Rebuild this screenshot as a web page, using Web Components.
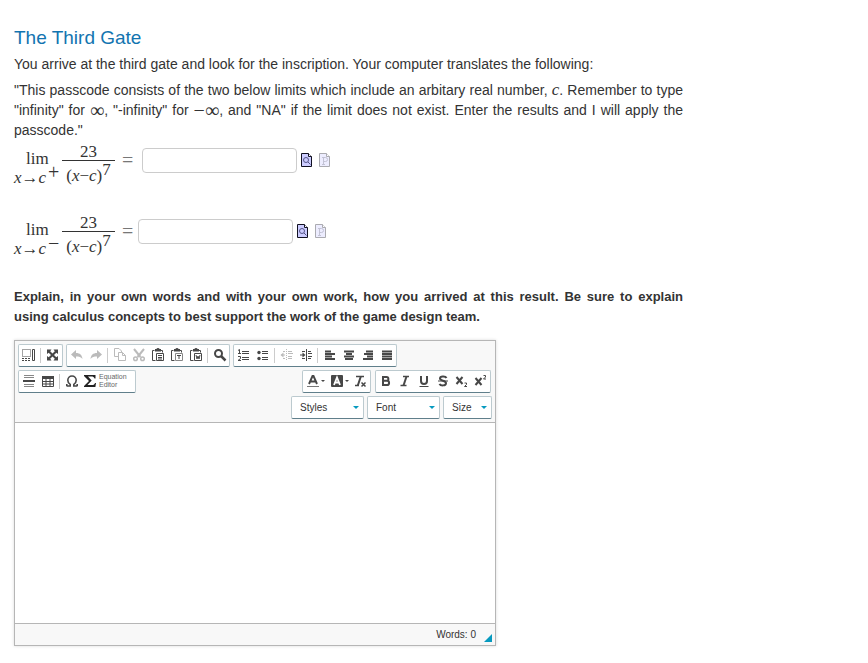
<!DOCTYPE html>
<html lang="en">
<head>
<meta charset="utf-8">
<meta name="viewport" content="width=device-width, initial-scale=1">
<title>The Third Gate</title>
<style>
    body {
        margin: 0;
        background: #fff;
        color: #333;
        font-family: "Liberation Sans", Arial, sans-serif;
        font-size: 14px;
        line-height: 20px;
    }
</style>
</head>
<body>
<question-page>
    <span slot="title">The Third Gate</span>
    <p>You arrive at the third gate and look for the inscription. Your computer translates the following:</p>
    <p class="story">"This passcode consists of the two below limits which include an arbitary real number, <math-text italic>c</math-text>. Remember to type "infinity" for <math-text big>∞</math-text>, "-infinity" for <math-text big>−∞</math-text>, and "NA" if the limit does not exist. Enter the results and I will apply the passcode."</p>
    <limit-question side="+" label="Limit from the right"></limit-question>
    <limit-question side="−" label="Limit from the left"></limit-question>
    <p class="task">Explain, in your own words and with your own work, how you arrived at this result. Be sure to explain using&nbsp;calculus concepts to best support the work of the game design team.</p>
    <essay-editor></essay-editor>
</question-page>

<script>
// 16x16 toolbar icons
const ICONS = {
    blocks: '<path d="M1.500 2.500h8v7h-8z" fill="none" stroke="currentColor" stroke-dasharray="1 1"/><path d="M11.500 2.500h2v11h-2z" fill="none" stroke="currentColor"/><path d="M1 11.500h9M1 13.500h9" stroke="currentColor" stroke-dasharray="2 1"/>',
    maximize: '<path d="M2.500 2.500H6.500L5.200 4.200 7.500 6.500l2.300-2.300L8.500 2.500h4.500V7l-1.700-1.300L9 8l2.300 2.300L13 9v4.500H8.500l1.300-1.700L7.500 9.500l-2.300 2.300L6.500 13.500H2V9l1.700 1.300L6 8 3.700 5.700 2 7V2.500z"/>',
    undo: '<path d="M7 3v3c4 0 6 2 6.500 6C12 9.800 10 9.500 7 9.500V12L2 7.500z"/>',
    redo: '<path d="M9 3v3c-4 0-6 2-6.500 6C4 9.800 6 9.500 9 9.500V12l5-4.500z"/>',
    copy: '<path d="M9.500 5V4L7 1.500H2.500v8H6M6.500 5.500h4L13.500 8.500v5h-7zM10.500 5.500v3h3" fill="none" stroke="currentColor"/>',
    cut: '<path d="M3 2l6.500 8M13 2L6.500 10" stroke="currentColor" stroke-width="2"/><circle cx="4.500" cy="11.800" r="1.800" fill="none" stroke="currentColor" stroke-width="1.500"/><circle cx="11.500" cy="11.800" r="1.800" fill="none" stroke="currentColor" stroke-width="1.500"/>',
    paste: '<path d="M4.500 3.500h-2v10h3M11 3.500h1.500v2" fill="none" stroke="currentColor"/><path d="M5 2h1.500a1.500 1 0 0 1 3 0H11v2.500H5z"/><path d="M6.500 6.500h7v7h-7z" fill="#fff" stroke="currentColor"/><path d="M8 8.500h4M8 10.500h4M8 12h4" stroke="currentColor"/>',
    pasteText: '<path d="M4.500 3.500h-2v10h3M11 3.500h1.500v2" fill="none" stroke="currentColor"/><path d="M5 2h1.500a1.500 1 0 0 1 3 0H11v2.500H5z"/><path d="M6.500 6.500h7v7h-7z" fill="#fff" stroke="#888"/><path d="M8 8.500h4M10 8.500V12" stroke="currentColor"/>',
    pasteWord: '<path d="M4.500 3.500h-2v10h3M11 3.500h1.500v2" fill="none" stroke="currentColor"/><path d="M5 2h1.500a1.500 1 0 0 1 3 0H11v2.500H5z"/><path d="M6.500 6.500h7v7h-7z" fill="#fff" stroke="currentColor"/><path d="M8 8l1 4 1-3 1 3 1-4" fill="none" stroke="currentColor"/>',
    find: '<circle cx="6.500" cy="6.500" r="3.500" fill="none" stroke="currentColor" stroke-width="2"/><path d="M9 9l4.500 4.500" stroke="currentColor" stroke-width="2.500"/>',
    numbered: '<path d="M2 3.500l1.500-1V7M2 6.500h3M2 9.500h2.500v2L2 13.500h3M6 4.500h7M6 6.500h7M6 10.500h7M6 12.500h7" fill="none" stroke="currentColor"/>',
    bulleted: '<circle cx="4" cy="5.500" r="1.700"/><circle cx="4" cy="11.500" r="1.700"/><path d="M7 4.500h6M7 6.500h6M7 10.500h6M7 12.500h6" stroke="currentColor"/>',
    outdent: '<path d="M7.500 2v12" stroke="currentColor" stroke-dasharray="1 1"/><path d="M4 4.500h2M9 4.500h4M9 6.500h5M9 9.500h4M9 11.500h4M4 11.500h2M2 8h4" stroke="currentColor"/><path d="M4.500 5.500v5L1.500 8z"/>',
    indent: '<path d="M8.500 2v12" stroke="currentColor"/><path d="M4 4.500h3M10 4.500h3M10 6.500h4M10 9.500h4M10 11.500h3M4 11.500h3M2 8h3" stroke="currentColor"/><path d="M4.500 5.500v5L7.500 8z"/>',
    left: '<path d="M3 4.500h6M3 7h10M3 9.500h7M3 12h10" stroke="currentColor" stroke-width="1.800"/>',
    center: '<path d="M3 4.500h10M5 7h6M3 9.500h10M4 12h8" stroke="currentColor" stroke-width="1.800"/>',
    right: '<path d="M6 4.500h7M4 7h9M7 9.500h6M3 12h10" stroke="currentColor" stroke-width="1.800"/>',
    justify: '<path d="M3 4.500h10M3 7h10M3 9.500h10M3 12h10" stroke="currentColor" stroke-width="1.800"/>',
    rule: '<path d="M3 2.500h10M3 4.500h10M3 11.500h10M3 13.500h10" stroke="#888"/><path d="M2 8h12" stroke="currentColor" stroke-width="2"/>',
    table: '<path d="M2 3h12v3H2z"/><path d="M2.500 3.500h11v10h-11zM2 8.500h12M2 11h12M6 5v8M10 5v8" fill="none" stroke="currentColor"/>',
    omega: '<path d="M2.500 13h3.700v-1.600C4.600 10.500 3.800 9 3.800 7.300 3.800 4.800 5.600 3 8 3s4.200 1.800 4.200 4.300c0 1.700-.8 3.200-2.400 4.100V13h3.700M2.800 11v2M13.200 11v2" fill="none" stroke="currentColor" stroke-width="1.600"/>',
    sigma: '<path d="M2 2h11.500v3.500h-1C12 4 11 3.500 9.500 3.500H6L9.700 7.500 5.500 12h4.700c1.500 0 2.300-.6 2.800-2h1l-.6 4H2v-1l5-5L2 3z" fill="#222"/>',
    subscript: '<path d="M2.500 4l6 7M8.500 4l-6 7" stroke="currentColor" stroke-width="2"/><path d="M10.500 10h2v1.500l-2 2H13" fill="none" stroke="currentColor"/>',
    superscript: '<path d="M2.500 5l6 7M8.500 5l-6 7" stroke="currentColor" stroke-width="2"/><path d="M10.500 2.500h2V4l-2 2H13" fill="none" stroke="currentColor"/>',
    bold: '<path d="M5 3.500v9M4 4h4.500a1.900 1.900 0 0 1 0 3.800H5h4a2.100 2.100 0 0 1 0 4.200H4" fill="none" stroke="currentColor" stroke-width="2"/>',
    italic: '<path d="M6 3.500h6M3.500 12.500h6" stroke="currentColor" stroke-width="1.500"/><path d="M9.500 3.500l-3 9" stroke="currentColor" stroke-width="2"/>',
    underline: '<path d="M5 3v5a3 3 0 0 0 6 0V3" fill="none" stroke="currentColor" stroke-width="2"/><path d="M3.500 13.500h9" stroke="currentColor"/>',
    strike: '<path d="M11.500 5C10.500 3 5 3 5 5.600 5 8.400 11 7.200 11 10.200 11 13 5.500 13 4.500 10.800" fill="none" stroke="currentColor" stroke-width="2"/><path d="M3 8h10" stroke="currentColor"/>',
    textColor: '<path d="M4 11l3.500-8h1L12 11M5.500 8.500h5" fill="none" stroke="currentColor" stroke-width="1.900"/><path d="M2 13.500h12" stroke="#777"/>',
    bgColor: '<rect x="2" y="2" width="12" height="12" rx="1"/><path d="M5 12l3-7.500L11 12M6 9.500h4" fill="none" stroke="#fff" stroke-width="1.800"/>',
    removeFormat: '<path d="M3 3.500h8M2 12.500h4" stroke="currentColor" stroke-width="1.500"/><path d="M7.800 3.500l-3 9" stroke="currentColor" stroke-width="2"/><path d="M8.500 9.500l4 4M12.500 9.500l-4 4" stroke="currentColor" stroke-width="1.500"/>'
};

class QuestionPage extends HTMLElement {
    constructor() {
        super();
        this.attachShadow({ mode: 'open' });
        this.shadowRoot.innerHTML = `
            <style>
                :host {
                    display: block;
                    max-width: 669px;
                    padding: 27px 14px 14px;
                }
                h1 {
                    margin: 0 0 5px;
                    color: #1274b0;
                    font-size: 19px;
                    font-weight: normal;
                    line-height: 22px;
                }
                ::slotted(p) {
                    margin: 0 0 6px;
                }
                ::slotted(p.story) {
                    margin: 0 0 2px;
                    text-align: justify;
                }
                ::slotted(p.task) {
                    margin: 3px 0 13px;
                    font-size: 13px;
                    font-weight: bold;
                    text-align: justify;
                }
            </style>
            <h1><slot name="title"></slot></h1>
            <slot></slot>
        `;
    }
}
customElements.define('question-page', QuestionPage);

class MathText extends HTMLElement {
    constructor() {
        super();
        this.attachShadow({ mode: 'open' });
        // no white space round the slot, the text runs on after it
        this.shadowRoot.innerHTML = `<style>
                :host {
                    display: inline;
                    font-family: "Liberation Serif", "Times New Roman", serif;
                    font-size: 17px;
                    line-height: 1px;
                }
                :host([italic]) {
                    font-style: italic;
                }
                :host([big]) {
                    font-size: 20px;
                    vertical-align: -2px;
                }
            </style><slot></slot>`;
    }
}
customElements.define('math-text', MathText);

class LimitQuestion extends HTMLElement {
    constructor() {
        super();
        this.attachShadow({ mode: 'open' });
    }
    connectedCallback() {
        const side = this.getAttribute('side') || '+';
        const label = this.getAttribute('label') || 'Answer';
        this.shadowRoot.innerHTML = `
            <style>
                :host {
                    display: flex;
                    align-items: flex-start;
                    height: 71px;
                }
                .math {
                    display: flex;
                    font-family: "Liberation Serif", "Times New Roman", serif;
                    font-size: 17px;
                }
                .lim {
                    display: grid;
                    grid-template-columns: 34px 14px;
                    grid-template-rows: 18px 20px;
                    padding-top: 8px;
                    line-height: 18px;
                }
                .lim .name {
                    padding-left: 12px;
                }
                .under {
                    grid-row: 2;
                    line-height: 20px;
                    white-space: nowrap;
                }
                .side {
                    grid-row: 2;
                    font-size: 20px;
                    line-height: 8px;
                }
                .frac {
                    width: 53px;
                    text-align: center;
                }
                .num {
                    height: 18px;
                    border-bottom: 1px solid #333;
                    line-height: 20px;
                }
                .den {
                    display: flex;
                    justify-content: center;
                    line-height: 30px;
                }
                .den .pow {
                    line-height: 18px;
                }
                .eq {
                    padding: 0 9px 0 7px;
                    color: #777;
                    font-size: 20px;
                    line-height: 36px;
                }
                :host([side="−"]) .eq {
                    padding-right: 5px;
                }
                input {
                    box-sizing: border-box;
                    width: 155px;
                    height: 25px;
                    margin: 6px 2px 0 0;
                    padding: 2px 6px;
                    border: 1px solid #ccc;
                    border-radius: 4px;
                    font: inherit;
                }
                button {
                    display: flex;
                    margin: 10px 3px 0 0;
                    padding: 0;
                    border: 0;
                    background: none;
                }
                button:disabled {
                    opacity: 0.35;
                }
            </style>
            <div class="math">
                <div class="lim">
                    <span class="name">lim</span>
                    <span class="under"><i>x</i>→<i>c</i></span>
                    <span class="side">${side}</span>
                </div>
                <div class="frac">
                    <div class="num">23</div>
                    <div class="den"><span>(<i>x</i>−<i>c</i>)</span><span class="pow">7</span></div>
                </div>
                <span class="eq">=</span>
            </div>
            <input type="text" aria-label="${label}">
            <button type="button" aria-label="Preview">
                <svg width="15" height="16" viewBox="0 0 15 16">
                    <path d="M2.500 1.500h7l3 3v10h-10z" fill="#ccf" stroke="#112"/>
                    <path d="M9.500 1.500v3h3" fill="#fff" stroke="#112"/>
                    <circle cx="7" cy="8" r="2.500" fill="none" stroke="#558"/>
                    <path d="M9 10l2.500 2.500" stroke="#558"/>
                </svg>
            </button>
            <button type="button" aria-label="Plot" disabled>
                <svg width="15" height="16" viewBox="0 0 15 16">
                    <path d="M2.500 1.500h7l3 3v10h-10z" fill="#ccf" stroke="#112"/>
                    <path d="M9.500 1.500v3h3" fill="#fff" stroke="#112"/>
                    <path d="M5 5.500h3.500a1.800 1.800 0 0 1 0 4H6.500M6.500 5.500v7M5 12.500h3" fill="none" stroke="#558"/>
                </svg>
            </button>
        `;
    }
}
customElements.define('limit-question', LimitQuestion);

class ToolGroup extends HTMLElement {
    constructor() {
        super();
        this.attachShadow({ mode: 'open' });
        this.shadowRoot.innerHTML = `
            <style>
                :host {
                    display: flex;
                    align-items: center;
                    box-sizing: border-box;
                    height: 23px;
                    border: 1px solid #bccacf;
                    border-bottom-color: #607f8b;
                    border-radius: 2px;
                    background: #fff;
                }
                ::slotted(hr) {
                    width: 1px;
                    height: 15px;
                    margin: 0 2px;
                    border: 0;
                    background: #ccc;
                }
            </style>
            <slot></slot>
        `;
    }
}
customElements.define('tool-group', ToolGroup);

class ToolButton extends HTMLElement {
    constructor() {
        super();
        this.attachShadow({ mode: 'open' });
    }
    connectedCallback() {
        const icon = this.getAttribute('icon');
        const disabled = this.hasAttribute('disabled') ? 'disabled' : '';
        this.shadowRoot.innerHTML = `
            <style>
                :host {
                    display: block;
                }
                button {
                    display: flex;
                    align-items: center;
                    justify-content: center;
                    width: 19px;
                    height: 21px;
                    padding: 0 0 1px 1px;
                    border: 0;
                    background: none;
                    color: #474747;
                    font-family: inherit;
                }
                button:disabled {
                    color: #bbb;
                }
                svg {
                    flex: none;
                    fill: currentColor;
                }
                :host([menu]) button {
                    width: 24px;
                    padding-left: 0;
                }
                :host([menu]) button::after {
                    content: "";
                    border: 2px solid transparent;
                    border-top-color: #474747;
                    border-bottom: 0;
                }
                :host([wide]) button {
                    justify-content: flex-start;
                    gap: 1px;
                    width: 54px;
                    color: #666;
                    font-size: 7px;
                    line-height: 8px;
                    text-align: left;
                }
            </style>
            <button type="button" aria-label="${this.getAttribute('label') || icon}" ${disabled}>
                <svg width="16" height="16" viewBox="0 0 16 16">${ICONS[icon]}</svg>
                <slot></slot>
            </button>
        `;
    }
}
customElements.define('tool-button', ToolButton);

class ToolSelect extends HTMLElement {
    constructor() {
        super();
        this.attachShadow({ mode: 'open' });
    }
    connectedCallback() {
        const label = this.getAttribute('label');
        this.shadowRoot.innerHTML = `
            <style>
                :host {
                    display: grid;
                    grid-template-columns: 1fr;
                    align-items: center;
                    box-sizing: border-box;
                    width: 73px;
                    height: 23px;
                    border: 1px solid #bccacf;
                    border-bottom-color: #607f8b;
                    border-radius: 2px;
                    background: #fff;
                }
                :host([short]) {
                    width: 49px;
                }
                select, svg {
                    grid-area: 1 / 1;
                }
                select {
                    appearance: none;
                    height: 21px;
                    padding: 0 14px 0 8px;
                    border: 0;
                    background: none;
                    color: #333;
                    font-family: inherit;
                    font-size: 10px;
                }
                svg {
                    justify-self: end;
                    margin-right: 4px;
                    pointer-events: none;
                }
            </style>
            <select aria-label="${label}"><option>${label}</option></select>
            <svg width="6" height="3" viewBox="0 0 6 3"><path d="M0 0h6L3 3z" fill="#069abf"/></svg>
        `;
    }
}
customElements.define('tool-select', ToolSelect);

class EssayEditor extends HTMLElement {
    constructor() {
        super();
        this.attachShadow({ mode: 'open' });
        this.shadowRoot.innerHTML = `
            <style>
                :host {
                    display: block;
                    box-sizing: border-box;
                    max-width: 482px;
                    border: 1px solid #b6b6b6;
                    box-shadow: 0 0 3px rgba(0, 0, 0, 0.15);
                }
                .toolbar {
                    display: flex;
                    flex-direction: column;
                    gap: 3px;
                    padding: 3px;
                    border-bottom: 1px solid #b6b6b6;
                    background: #f8f8f8;
                }
                .row {
                    display: flex;
                    gap: 3px;
                }
                .row.split {
                    gap: 4px;
                    padding-right: 1px;
                }
                .end {
                    margin-left: auto;
                }
                textarea {
                    display: block;
                    box-sizing: border-box;
                    width: 100%;
                    height: 200px;
                    padding: 8px;
                    border: 0;
                    resize: none;
                    font: inherit;
                }
                .status {
                    display: flex;
                    justify-content: flex-end;
                    gap: 8px;
                    height: 21px;
                    padding-right: 3px;
                    border-top: 1px solid #b6b6b6;
                    background: #f8f8f8;
                    color: #333;
                    font-size: 10px;
                    line-height: 21px;
                }
                .status svg {
                    align-self: flex-end;
                    margin-bottom: 3px;
                }
            </style>
            <div class="toolbar">
                <div class="row">
                    <tool-group>
                        <tool-button icon="blocks"></tool-button><hr>
                        <tool-button icon="maximize"></tool-button>
                    </tool-group>
                    <tool-group>
                        <tool-button icon="undo" disabled></tool-button>
                        <tool-button icon="redo" disabled></tool-button><hr>
                        <tool-button icon="copy" disabled></tool-button>
                        <tool-button icon="cut" disabled></tool-button>
                        <tool-button icon="paste"></tool-button>
                        <tool-button icon="pasteText"></tool-button>
                        <tool-button icon="pasteWord"></tool-button><hr>
                        <tool-button icon="find"></tool-button>
                    </tool-group>
                    <tool-group>
                        <tool-button icon="numbered"></tool-button>
                        <tool-button icon="bulleted"></tool-button><hr>
                        <tool-button icon="outdent" disabled></tool-button>
                        <tool-button icon="indent"></tool-button><hr>
                        <tool-button icon="left"></tool-button>
                        <tool-button icon="center"></tool-button>
                        <tool-button icon="right"></tool-button>
                        <tool-button icon="justify"></tool-button>
                    </tool-group>
                </div>
                <div class="row split">
                    <tool-group>
                        <tool-button icon="rule"></tool-button>
                        <tool-button icon="table"></tool-button><hr>
                        <tool-button icon="omega"></tool-button>
                        <tool-button icon="sigma" label="Equation Editor" wide><span>Equation<br>Editor</span></tool-button>
                    </tool-group>
                    <tool-group class="end">
                        <tool-button icon="textColor" menu></tool-button>
                        <tool-button icon="bgColor" menu></tool-button>
                        <tool-button icon="removeFormat"></tool-button>
                    </tool-group>
                    <tool-group>
                        <tool-button icon="bold"></tool-button>
                        <tool-button icon="italic"></tool-button>
                        <tool-button icon="underline"></tool-button>
                        <tool-button icon="strike"></tool-button>
                        <tool-button icon="subscript"></tool-button>
                        <tool-button icon="superscript"></tool-button>
                    </tool-group>
                </div>
                <div class="row">
                    <tool-select class="end" label="Styles"></tool-select>
                    <tool-select label="Font"></tool-select>
                    <tool-select label="Size" short></tool-select>
                </div>
            </div>
            <textarea aria-label="Your explanation"></textarea>
            <div class="status">
                <span>Words: 0</span>
                <svg width="8" height="8" viewBox="0 0 8 8"><path d="M8 0v8H0z" fill="#069abf"/></svg>
            </div>
        `;
    }
}
customElements.define('essay-editor', EssayEditor);
</script>
</body>
</html>
